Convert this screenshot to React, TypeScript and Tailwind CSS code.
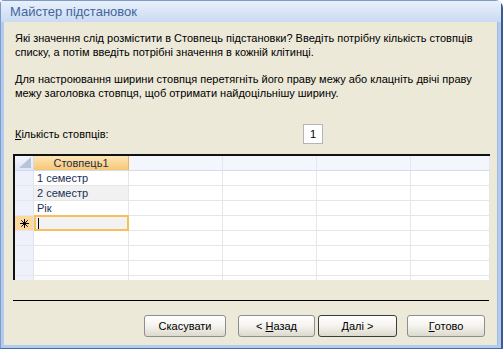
import React from 'react';

const font = { fontFamily: '"Liberation Sans", Arial, sans-serif' };

// ============================================================================
// GRID
// ============================================================================
const cols = [95, 94, 94, 94, 79];

function NewRowMark() {
  return (
    <svg width="9" height="9" viewBox="0 0 9 9" stroke="#000" strokeWidth="1">
      <line x1="4.5" y1="0" x2="4.5" y2="9" />
      <line x1="0" y1="4.5" x2="9" y2="4.5" />
      <line x1="1.3" y1="1.3" x2="7.7" y2="7.7" />
      <line x1="7.7" y1="1.3" x2="1.3" y2="7.7" />
    </svg>
  );
}

function HeaderRow() {
  return (
    <div className="flex h-[15px] border-b border-[#d5dbe8]">
      <div className="relative w-[19px] shrink-0 border-r border-[#d5dbe8] bg-gradient-to-b from-[#f2f5fc] to-[#dfe7f5]">
        <svg className="absolute right-[2px] bottom-[2px]" width="12" height="11" viewBox="0 0 12 11">
          <polygon points="12,0 12,11 0,11" fill="#b6c3dc" />
        </svg>
      </div>
      <div className="w-[95px] shrink-0 flex items-center justify-center border-r border-[#e0b768] bg-gradient-to-b from-[#fde6b8] to-[#f7c670] text-[11px] text-[#1e2c4a]">
        Стовпець1
      </div>
      {cols.slice(1).map((w, i) => (
        <div
          key={i}
          style={{ width: w }}
          className="shrink-0 border-r border-[#e2e7f2] bg-[#f4f6fd]"
        />
      ))}
    </div>
  );
}

function DataRow({ text, shaded, active, newRow }: { text?: string; shaded?: boolean; active?: boolean; newRow?: boolean }) {
  return (
    <div className="flex h-[15px] border-b border-[#e6e6e6]">
      <div
        className={
          'w-[19px] shrink-0 border-r border-[#dde3ef] flex items-center justify-center ' +
          (newRow ? 'bg-[#fcd89c]' : 'bg-[#eef1fb]')
        }
      >
        {newRow && <NewRowMark />}
      </div>
      <div
        className={
          'w-[95px] shrink-0 flex items-center text-[11px] text-[#1a2f5a] ' +
          (active
            ? 'border-2 border-[#f8bd5c] bg-[#f2f2f2] -my-[1px] pl-[2px]'
            : 'border-r border-[#e6e6e6] pl-[3px] ' + (shaded ? 'bg-[#f1f1f1]' : 'bg-white'))
        }
      >
        {active ? <span className="w-px h-[11px] bg-black" /> : text}
      </div>
      {cols.slice(1).map((w, i) => (
        <div key={i} style={{ width: w }} className="shrink-0 border-r border-[#e6e6e6] bg-white" />
      ))}
    </div>
  );
}

function Datasheet() {
  return (
    <div className="h-[126px] w-[477px] overflow-hidden border-t-2 border-l-2 border-[#111] bg-white">
      <HeaderRow />
      <DataRow text="1 семестр" />
      <DataRow text="2 семестр" shaded />
      <DataRow text="Рік" />
      <DataRow active newRow />
      <DataRow />
      <DataRow />
      <DataRow />
      <DataRow />
    </div>
  );
}

// ============================================================================
// BUTTON
// ============================================================================
function Button({ children, isDefault, w }: { children: React.ReactNode; isDefault?: boolean; w: string }) {
  return (
    <div
      className={
        'h-[22px] flex items-center justify-center rounded-[3px] border bg-gradient-to-b from-[#ffffff] via-[#f4f3ee] to-[#dcd9cd] text-[11px] text-black ' +
        w +
        ' ' +
        (isDefault ? 'border-[#3c3c3c]' : 'border-[#8e8e8e]')
      }
    >
      {children}
    </div>
  );
}

// ============================================================================
// WIZARD
// ============================================================================
export default function App() {
  return (
    <div style={font} className="w-[503px] h-[349px] overflow-hidden bg-white">
      <div className="w-[503px] h-[349px] flex flex-col rounded-tr-[8px] rounded-tl-[4px] border border-[#7f9ac4] border-r-[2px] border-r-[#3d5b92] border-b-[#4a6aa0] bg-[#b3cbee]">
        {/* title bar */}
        <div className="h-[21px] shrink-0 flex items-center pl-[9px] bg-gradient-to-b from-[#e9f0fb] to-[#c9dbf3] text-[13px] text-[#44659a]">
          Майстер підстановок
        </div>

        {/* body */}
        <div className="flex-1 flex flex-col mx-[3px] mb-[3px] border-r-[1px] border-[#9fbbe3] bg-[#ece9d8] pl-[9px] pt-[9px] text-[11px] leading-[14px] text-black">
          <p className="pl-[2px] w-[470px]">
            Які значення слід розмістити в Стовпець підстановки? Введіть потрібну кількість стовпців
            списку, а потім введіть потрібні значення в кожній клітинці.
          </p>
          <p className="pl-[2px] mt-[13px] w-[470px]">
            Для настроювання ширини стовпця перетягніть його праву межу або клацніть двічі праву
            межу заголовка стовпця, щоб отримати найдоцільнішу ширину.
          </p>

          <div className="mt-[24px] flex items-center h-[20px] pl-[2px]">
            <span className="w-[288px]">
              <span className="underline">К</span>ількість стовпців:
            </span>
            <div className="w-[20px] h-[20px] border border-[#b5b5b5] bg-white flex items-center justify-center">
              1
            </div>
          </div>

          <div className="mt-[10px]">
            <Datasheet />
          </div>

          <div className="mt-[20px] w-[476px] h-px bg-black" />

          <div className="mt-[14px] flex items-center pl-[131px]">
            <Button w="w-[82px]">Скасувати</Button>
            <div className="ml-[12px]">
              <Button w="w-[77px]">
                &lt; <span className="underline ml-[3px]">Н</span>азад
              </Button>
            </div>
            <div className="ml-[3px]">
              <Button w="w-[79px]" isDefault>
                <span className="underline">Д</span>алі &gt;
              </Button>
            </div>
            <div className="ml-[10px]">
              <Button w="w-[78px]">
                <span className="underline">Г</span>отово
              </Button>
            </div>
          </div>
        </div>
      </div>
    </div>
  );
}
